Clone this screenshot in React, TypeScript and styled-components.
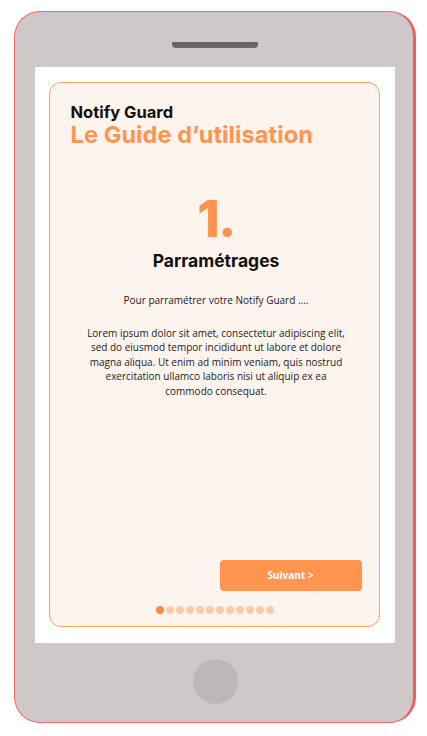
import React from "react";
import styled, { createGlobalStyle } from "styled-components";

const Global = createGlobalStyle`
  html, body { margin: 0; padding: 0; background: #ffffff; }
  * { box-sizing: border-box; }
`;

const Page = styled.div`
  padding: 11px 0 0 14px;
`;

const Phone = styled.div`
  width: 402px;
  height: 712px;
  background: #cec8c8;
  border: 1.5px solid #f76868;
  border-right: 3px solid #f75a5a;
  border-radius: 26px;
  display: flex;
  flex-direction: column;
  align-items: flex-start;
  padding: 29.5px 0 0 19.5px;
`;

const Speaker = styled.div`
  width: 86px;
  height: 6px;
  background: #676767;
  border-radius: 0 0 4px 4px;
  margin-left: 137px;
`;

const Screen = styled.div`
  margin-top: 19px;
  width: 360px;
  height: 576px;
  background: #ffffff;
  padding: 15px 15px 16px 14px;
  display: flex;
`;

const Card = styled.div`
  flex: 1;
  background: #fef4ee;
  border: 1.5px solid #ffa062;
  border-radius: 12px;
  padding: 19px 17px 12px 21px;
  display: flex;
  flex-direction: column;
`;

const Brand = styled.div`
  font-family: Inter, "Noto Sans", sans-serif;
  font-weight: 700;
  font-size: 16.5px;
  line-height: 20px;
  color: #111111;
`;

const Title = styled.div`
  font-family: Inter, "Noto Sans", sans-serif;
  font-weight: 700;
  font-size: 23.5px;
  line-height: 25px;
  color: #ff954f;
  letter-spacing: 0.1px;
`;

const Step = styled.div`
  margin-top: 46px;
  text-align: center;
  font-family: Inter, "Noto Sans", sans-serif;
  font-weight: 800;
  font-size: 51px;
  line-height: 52px;
  color: #ff934c;
  letter-spacing: -1.5px;
`;

const StepName = styled.div`
  margin-top: 5px;
  text-align: center;
  font-family: Inter, "Noto Sans", sans-serif;
  font-weight: 700;
  font-size: 17.5px;
  line-height: 22px;
  color: #111111;
`;

const Lead = styled.p`
  margin: 21px 0 0 0;
  text-align: center;
  font-family: "Open Sans", sans-serif;
  font-size: 10px;
  line-height: 14px;
  color: #222222;
`;

const Body = styled.p`
  margin: 19px 0 0 0;
  padding: 0 11px;
  text-align: center;
  font-family: "Open Sans", sans-serif;
  font-size: 10px;
  line-height: 14.5px;
  color: #222222;
`;

const Spacer = styled.div`
  flex: 1;
`;

const Actions = styled.div`
  display: flex;
  justify-content: flex-end;
`;

const NextButton = styled.button`
  width: 142px;
  height: 31px;
  border: none;
  border-radius: 4px;
  background: #ff954f;
  color: #ffffff;
  font-family: "Open Sans", sans-serif;
  font-weight: 700;
  font-size: 10px;
  cursor: pointer;
`;

const Dots = styled.div`
  margin-top: 15px;
  display: flex;
  justify-content: center;
  gap: 2px;
  padding-right: 2px;
`;

const Dot = styled.span<{ $active?: boolean }>`
  width: 8px;
  height: 8px;
  border-radius: 50%;
  background: ${(p) => (p.$active ? "#ff8a3d" : "#ffcaa6")};
`;

const HomeButton = styled.div`
  margin-top: 16px;
  margin-left: 158px;
  width: 45px;
  height: 45px;
  border-radius: 50%;
  background: #bcb8b7;
`;

export default function App() {
  return (
    <Page>
      <Global />
      <Phone>
        <Speaker />
        <Screen>
          <Card>
            <Brand>Notify Guard</Brand>
            <Title>Le Guide d’utilisation</Title>
            <Step>1.</Step>
            <StepName>Parramétrages</StepName>
            <Lead>Pour parramétrer votre Notify Guard ....</Lead>
            <Body>
              Lorem ipsum dolor sit amet, consectetur adipiscing elit, sed do eiusmod tempor
              incididunt ut labore et dolore magna aliqua. Ut enim ad minim veniam, quis nostrud
              exercitation ullamco laboris nisi ut aliquip ex ea commodo consequat.
            </Body>
            <Spacer />
            <Actions>
              <NextButton>Suivant &gt;</NextButton>
            </Actions>
            <Dots>
              {Array.from({ length: 12 }).map((_, i) => (
                <Dot key={i} $active={i === 0} />
              ))}
            </Dots>
          </Card>
        </Screen>
        <HomeButton />
      </Phone>
    </Page>
  );
}
